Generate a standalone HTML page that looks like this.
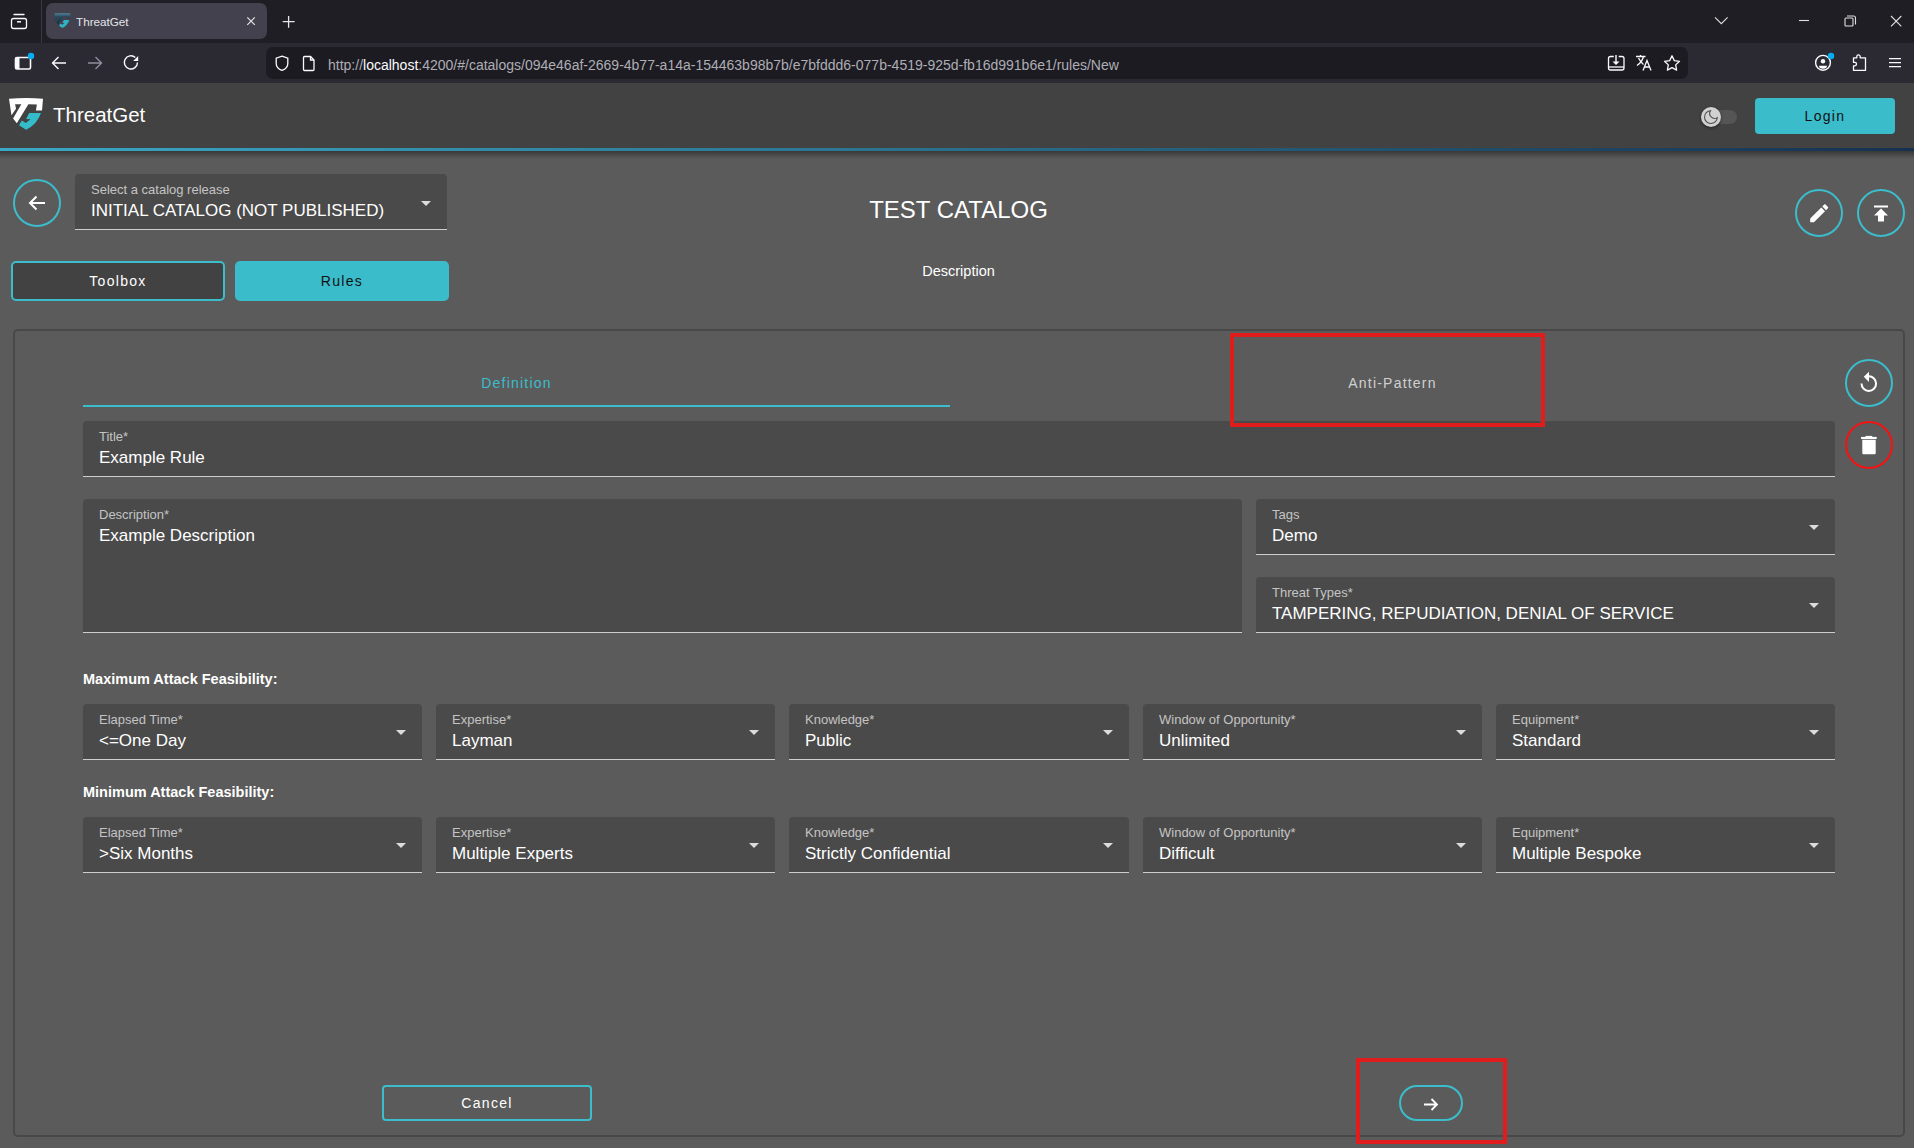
<!DOCTYPE html>
<html><head><meta charset="utf-8">
<style>
*{box-sizing:border-box;margin:0;padding:0}
html,body{width:1914px;height:1148px;overflow:hidden;background:#5b5b5b;font-family:"Liberation Sans",sans-serif;}
.abs{position:absolute}
svg{position:absolute;overflow:visible}
#tabbar{position:absolute;left:0;top:0;width:1914px;height:43px;background:#1f1e25}
#toolbar{position:absolute;left:0;top:43px;width:1914px;height:40px;background:#2b2a33}
#urlbar{position:absolute;left:266px;top:47px;width:1422px;height:32px;background:#1c1b22;border-radius:7px}
#tab{position:absolute;left:46px;top:3px;width:221px;height:36px;background:#42414d;border-radius:7px}
#appbar{position:absolute;left:0;top:83px;width:1914px;height:65px;background:#424242}
#gradline{position:absolute;left:0;top:148px;width:1914px;height:3px;background:linear-gradient(90deg,#3aa9c5 0%,#296f8b 50%,#163150 100%)}
#shadow{position:absolute;left:0;top:151px;width:1914px;height:8px;background:linear-gradient(180deg,rgba(0,0,0,.38),rgba(0,0,0,0))}
.circ{position:absolute;width:48px;height:48px;border:2px solid #3bbdcc;border-radius:50%}
.field{position:absolute;background:#4a4a4a;border-radius:4px 4px 0 0;border-bottom:1px solid #cecece}
.lbl{position:absolute;left:16px;top:9px;font-size:13px;line-height:13px;color:#c4c4c4;white-space:nowrap}
.val{position:absolute;left:16px;top:28px;font-size:17px;line-height:17px;color:#fff;white-space:nowrap}
.caret{position:absolute;right:16px;top:26px;width:0;height:0;border-left:5px solid transparent;border-right:5px solid transparent;border-top:5px solid #dcdcdc}
.btn{position:absolute;font-size:14px;letter-spacing:1.3px;text-align:center;border-radius:5px}
.h3{position:absolute;left:83px;font-size:14.5px;font-weight:700;color:#fff;white-space:nowrap}
</style></head><body>
<div id="tabbar"></div>
<div class="abs" style="left:41px;top:0;width:1px;height:43px;background:#3a3941"></div>
<div id="tab"></div>
<div id="toolbar"></div>
<div id="urlbar"></div>
<div id="appbar"></div>
<div id="gradline"></div>
<div id="shadow"></div>

<!-- browser chrome icons -->
<svg style="left:0;top:0" width="1914" height="83" viewBox="0 0 1914 83" fill="none" stroke="#fbfbfe" stroke-width="1.3">
  <!-- tab list icon -->
  <rect x="11.5" y="18.5" width="15" height="10" rx="2"/>
  <path d="M14 14.5h10" stroke-linecap="round"/>
  <path d="M17 21.8h4" stroke-width="1.5"/>
  <!-- tab close -->
  <path d="M247.3 17.3l7.5 7.5M254.8 17.3l-7.5 7.5" stroke="#e6e6ea" stroke-width="1.2"/>
  <!-- new tab plus -->
  <path d="M288.6 16v11.7M282.7 21.7h11.9" stroke="#e6e6ea" stroke-width="1.3"/>
  <!-- window controls -->
  <path d="M1715 17.3l6.3 6.3 6.3-6.3" stroke="#e0e0e0" stroke-width="1.1"/>
  <path d="M1799 20.5h10" stroke="#e0e0e0" stroke-width="1.1"/>
  <rect x="1845" y="18" width="8" height="8" rx="1" stroke="#e0e0e0" stroke-width="1.1"/>
  <path d="M1847 16h6.5a2 2 0 0 1 2 2v6.5" stroke="#e0e0e0" stroke-width="1.1"/>
  <path d="M1891 16l10.3 10.3M1901.3 16l-10.3 10.3" stroke="#e0e0e0" stroke-width="1.1"/>
  <!-- sidebar icon -->
  <rect x="15.5" y="57.5" width="15" height="11.5" rx="1.5" stroke-width="1.6"/>
  <rect x="15.5" y="57.5" width="4" height="11.5" fill="#fbfbfe" stroke="none"/>
  <circle cx="31" cy="56" r="3.2" fill="#05aef2" stroke="none"/>
  <!-- back -->
  <path d="M66 63H52.5M58.5 57l-6 6 6 6" stroke-width="1.4"/>
  <!-- forward -->
  <path d="M88 63h13.5M95.5 57l6 6-6 6" stroke="#8f8f9d" stroke-width="1.4"/>
  <!-- reload -->
  <path d="M137.5 62.5a6.6 6.6 0 1 1-2.2-5" stroke-width="1.4"/>
  <path d="M138.2 56v5h-5z" fill="#fbfbfe" stroke="none"/>
  <!-- shield -->
  <path d="M282 56.2l5.8 2v5.2c0 3.2-2.4 5.6-5.8 7-3.4-1.4-5.8-3.8-5.8-7v-5.2z" stroke-width="1.3" transform="translate(0,0)"/>
  <!-- page icon -->
  <path d="M304.5 56.5h6l3.5 3.5v9.5a1 1 0 0 1-1 1h-8.5a1 1 0 0 1-1-1v-12a1 1 0 0 1 1-1z" stroke-width="1.3"/>
  <path d="M310.5 56.5v3.5h3.5" stroke-width="1.3"/>
  <!-- download -->
  <path d="M1613.8 56.5h-3.3a2 2 0 0 0-2 2v9.5a2 2 0 0 0 2 2h11.5a2 2 0 0 0 2-2v-9.5a2 2 0 0 0-2-2h-3.3" stroke-width="1.3"/>
  <path d="M1608.5 67h15.5" stroke-width="1.3"/>
  <path d="M1616 55v8" stroke-width="1.4"/>
  <path d="M1612.5 61.5h7l-3.5 3.5z" fill="#fbfbfe" stroke="none"/>
  <!-- translate -->
  <path d="M1636 56.5h9.5M1640.5 55v1.5M1643.5 56.5c-1 4-3.5 7-6.5 9M1638.5 58c1.5 3 3 5 5 6.5" stroke-width="1.3"/>
  <path d="M1643 70.5l4-10 4 10M1644.5 67h5" stroke-width="1.3"/>
  <!-- star -->
  <path d="M1672 55.8l2.3 4.8 5.2.7-3.8 3.6.9 5.2-4.6-2.5-4.6 2.5.9-5.2-3.8-3.6 5.2-.7z" stroke-width="1.3" stroke-linejoin="round"/>
  <!-- account -->
  <circle cx="1823" cy="62.8" r="7.4" stroke-width="1.4"/>
  <circle cx="1823" cy="61.3" r="2.2" fill="#fbfbfe" stroke="none"/>
  <path d="M1819 65.7h8a4 3 0 0 1-8 0z" fill="#fbfbfe" stroke="none"/>
  <circle cx="1831" cy="56" r="3.2" fill="#05aef2" stroke="none"/>
  <!-- puzzle -->
  <path d="M1853.5 70.3v-4.5h1.3a1.7 1.7 0 0 0 0-3.4h-1.3v-4.6h3.3v-1.2a1.7 1.7 0 0 1 3.4 0v1.2h5.3v12.5z" stroke-width="1.3" stroke-linejoin="round"/>
  <!-- menu -->
  <path d="M1889 58.6h12M1889 62.6h12M1889 66.6h12" stroke-width="1.3"/>
</svg>

<!-- favicon in tab -->
<svg style="left:52.6px;top:12.1px" width="18.8" height="16.9" viewBox="0 0 1276 1148">
  <defs><linearGradient id="fg" x1="0" y1="0" x2="0" y2="1"><stop offset="0" stop-color="#5a7d90"/><stop offset="0.35" stop-color="#1f4a63"/><stop offset="1" stop-color="#12303f"/></linearGradient></defs>
  <path d="M95,90 Q640,40 1180,90 L1150,465 L955,465 L985,270 L715,265 L345,870 L225,715 L490,265 L290,265 L320,410 L175,610 Z" fill="url(#fg)"/>
  <path d="M740,545 L1115,545 Q1000,900 640,1080 L415,935 L505,785 L630,860 L785,745 L640,735 Z" fill="#2fb3c2"/>
</svg>
<div class="abs" style="left:76px;top:13.8px;font-size:11.7px;line-height:15px;color:#e4e4ea;white-space:nowrap">ThreatGet</div>

<!-- URL text -->
<div class="abs" style="left:328px;top:57px;font-size:14px;line-height:17px;color:#aeaeb4;white-space:nowrap">http://<span style="color:#fbfbfe">localhost</span>:4200/#/catalogs/094e46af-2669-4b77-a14a-154463b98b7b/e7bfddd6-077b-4519-925d-fb16d991b6e1/rules/New</div>

<!-- app header -->
<svg style="left:6px;top:96px" width="40" height="36" viewBox="0 0 1276 1148">
  <path d="M95,90 Q640,40 1180,90 L1150,465 L955,465 L985,270 L715,265 L345,870 L225,715 L490,265 L290,265 L320,410 L175,610 Z" fill="#ffffff"/>
  <path d="M740,545 L1115,545 Q1000,900 640,1080 L415,935 L505,785 L630,860 L785,745 L640,735 Z" fill="#35bccb"/>
</svg>
<div class="abs" style="left:53px;top:104px;font-size:20.5px;line-height:22px;color:#fff;white-space:nowrap">ThreatGet</div>

<!-- toggle -->
<div class="abs" style="left:1703px;top:110px;width:34px;height:14px;border-radius:7px;background:#555555"></div>
<div class="abs" style="left:1701px;top:107px;width:20px;height:20px;border-radius:50%;background:#d1d1d1;box-shadow:0 1px 3px rgba(0,0,0,.5)"></div>
<svg style="left:1701px;top:107px" width="20" height="20" viewBox="0 0 20 20">
  <path d="M9.6 3.7A6.4 6.4 0 1 0 16.3 10.6 4.9 4.9 0 0 1 9.6 3.7z" fill="none" stroke="#4e4e4e" stroke-width="1.1"/>
</svg>
<!-- Login -->
<div class="btn" style="left:1755px;top:98px;width:140px;height:36px;line-height:36px;background:#3bbccb;color:#111;border-radius:4px">Login</div>

<!-- back circle -->
<div class="circ" style="left:13px;top:179px"></div>
<svg style="left:13px;top:179px" width="48" height="48" viewBox="0 0 48 48">
  <path d="M32 24H17M23.5 17.5L17 24l6.5 6.5" fill="none" stroke="#fff" stroke-width="2"/>
</svg>

<!-- catalog select -->
<div class="field" style="left:75px;top:174px;width:372px;height:56px;border-bottom-color:#cecece">
  <div class="lbl" style="top:9px">Select a catalog release</div>
  <div class="val" style="top:28px">INITIAL CATALOG (NOT PUBLISHED)</div>
  <div class="caret" style="top:27px;right:16px"></div>
</div>

<!-- Toolbox / Rules -->
<div class="btn" style="left:11px;top:261px;width:214px;height:40px;line-height:36px;border:2px solid #3bbdcc;background:#424242;color:#fff">Toolbox</div>
<div class="btn" style="left:235px;top:261px;width:214px;height:40px;line-height:40px;background:#3bbccb;color:#111">Rules</div>

<!-- title -->
<div class="abs" style="left:0;width:1914px;top:196px;text-align:center;font-size:24px;line-height:28px;color:#fff;padding-left:3px">TEST CATALOG</div>
<div class="abs" style="left:0;width:1914px;top:263px;text-align:center;font-size:14.5px;line-height:16px;color:#fff;padding-left:3px">Description</div>

<!-- edit / upload -->
<div class="circ" style="left:1795px;top:189px"></div>
<svg style="left:1795px;top:189px" width="48" height="48" viewBox="0 0 48 48">
  <path transform="translate(12.2,12.3)" d="M3 17.25V21h3.75L17.81 9.94l-3.75-3.75L3 17.25zM20.71 7.04a1 1 0 0 0 0-1.41l-2.34-2.34a1 1 0 0 0-1.41 0l-1.83 1.83 3.75 3.75 1.83-1.83z" fill="#fff"/>
</svg>
<div class="circ" style="left:1857px;top:189px"></div>
<svg style="left:1857px;top:189px" width="48" height="48" viewBox="0 0 48 48">
  <path transform="translate(12,12.5)" d="M5 4v2h14V4H5zm0 10h4v6h6v-6h4l-7-7-7 7z" fill="#fff"/>
</svg>

<!-- main card -->
<div class="abs" style="left:13px;top:329px;width:1892px;height:808px;border:2px solid #484848;border-radius:5px"></div>

<!-- tabs -->
<div class="abs" style="left:83px;top:373px;width:867px;text-align:center;font-size:14px;letter-spacing:1.2px;color:#3bbdcc;line-height:20px">Definition</div>
<div class="abs" style="left:83px;top:405px;width:867px;height:2px;background:#3bbdcc"></div>
<div class="abs" style="left:950px;top:373px;width:885px;text-align:center;font-size:14px;letter-spacing:1.2px;color:#d0d0d0;line-height:20px">Anti-Pattern</div>

<!-- right side circles -->
<div class="circ" style="left:1845px;top:359px"></div>
<svg style="left:1845px;top:359px" width="48" height="48" viewBox="0 0 48 48">
  <path d="M16.5 24.6A7.3 7.3 0 1 0 23.8 17.3" fill="none" stroke="#fff" stroke-width="2"/>
  <path d="M24 12.7V22.9L18.8 17.8z" fill="#fff"/>
</svg>
<div class="circ" style="left:1845px;top:421px;border-color:#f51212"></div>
<svg style="left:1845px;top:421px" width="48" height="48" viewBox="0 0 48 48">
  <path d="M16.1 15.9h15.6v2.1H16.1z" fill="#fff"/>
  <path d="M20.5 14.9h6.8v1.2h-6.8z" fill="#fff"/>
  <path d="M17.3 18.8h13.4v13.4a1 1 0 0 1-1 1h-11.4a1 1 0 0 1-1-1z" fill="#fff"/>
</svg>

<!-- title field -->
<div class="field" style="left:83px;top:421px;width:1752px;height:56px">
  <div class="lbl">Title*</div>
  <div class="val">Example Rule</div>
</div>

<!-- description -->
<div class="field" style="left:83px;top:499px;width:1159px;height:134px">
  <div class="lbl">Description*</div>
  <div class="val">Example Description</div>
</div>

<!-- tags -->
<div class="field" style="left:1256px;top:499px;width:579px;height:56px">
  <div class="lbl">Tags</div>
  <div class="val">Demo</div>
  <div class="caret"></div>
</div>
<div class="field" style="left:1256px;top:577px;width:579px;height:56px">
  <div class="lbl">Threat Types*</div>
  <div class="val">TAMPERING, REPUDIATION, DENIAL OF SERVICE</div>
  <div class="caret"></div>
</div>

<div class="h3" style="top:671px">Maximum Attack Feasibility:</div>
<div class="field" style="left:83px;top:704px;width:339px;height:56px"><div class="lbl">Elapsed Time*</div><div class="val">&lt;=One Day</div><div class="caret"></div></div>
<div class="field" style="left:436px;top:704px;width:339px;height:56px"><div class="lbl">Expertise*</div><div class="val">Layman</div><div class="caret"></div></div>
<div class="field" style="left:789px;top:704px;width:340px;height:56px"><div class="lbl">Knowledge*</div><div class="val">Public</div><div class="caret"></div></div>
<div class="field" style="left:1143px;top:704px;width:339px;height:56px"><div class="lbl">Window of Opportunity*</div><div class="val">Unlimited</div><div class="caret"></div></div>
<div class="field" style="left:1496px;top:704px;width:339px;height:56px"><div class="lbl">Equipment*</div><div class="val">Standard</div><div class="caret"></div></div>

<div class="h3" style="top:784px">Minimum Attack Feasibility:</div>
<div class="field" style="left:83px;top:817px;width:339px;height:56px"><div class="lbl">Elapsed Time*</div><div class="val">&gt;Six Months</div><div class="caret"></div></div>
<div class="field" style="left:436px;top:817px;width:339px;height:56px"><div class="lbl">Expertise*</div><div class="val">Multiple Experts</div><div class="caret"></div></div>
<div class="field" style="left:789px;top:817px;width:340px;height:56px"><div class="lbl">Knowledge*</div><div class="val">Strictly Confidential</div><div class="caret"></div></div>
<div class="field" style="left:1143px;top:817px;width:339px;height:56px"><div class="lbl">Window of Opportunity*</div><div class="val">Difficult</div><div class="caret"></div></div>
<div class="field" style="left:1496px;top:817px;width:339px;height:56px"><div class="lbl">Equipment*</div><div class="val">Multiple Bespoke</div><div class="caret"></div></div>

<!-- cancel -->
<div class="btn" style="left:382px;top:1085px;width:210px;height:36px;line-height:32px;border:2px solid #3bbdcc;color:#fff;border-radius:4px">Cancel</div>
<!-- next pill -->
<div class="abs" style="left:1399px;top:1085px;width:64px;height:36px;border:2px solid #3bbdcc;border-radius:18px"></div>
<svg style="left:1399px;top:1085px" width="64" height="36" viewBox="0 0 64 36">
  <path d="M25 19.5h13M32.5 14l5.5 5.5-5.5 5.5" fill="none" stroke="#fff" stroke-width="1.8"/>
</svg>

<!-- red annotation rectangles -->
<div class="abs" style="left:1230px;top:333px;width:315px;height:94px;border:4px solid #e01c1c"></div>
<div class="abs" style="left:1356px;top:1058px;width:151px;height:86px;border:4px solid #e01c1c"></div>

</body></html>
